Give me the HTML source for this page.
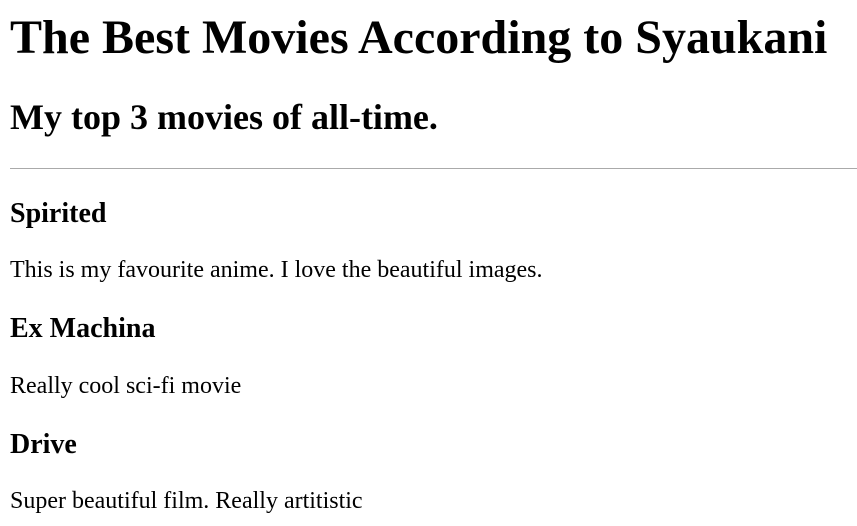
<!DOCTYPE html>
<html><head><meta charset="utf-8"><style>
html{background:#fff}
body{margin:0 10px 0 10px;font-family:"Liberation Serif","Times New Roman",serif;color:#000;line-height:1.15}
h1{font-size:48px;margin:10px 0 0;font-weight:bold}
h2{font-size:36px;margin:32px 0 0;font-weight:bold}
hr{border:none;border-top:1px solid #aaa;margin:29px 0 0;margin-right:-10px}
h3{font-size:28px;margin:29px 0 0;font-weight:bold}
p{font-size:24px;margin:27px 0 0}
p + h3{margin-top:29px}
</style></head><body>
<h1>The Best Movies According to Syaukani</h1>
<h2>My top 3 movies of all-time.</h2>
<hr>
<h3>Spirited</h3>
<p>This is my favourite anime. I love the beautiful images.</p>
<h3>Ex Machina</h3>
<p>Really cool sci-fi movie</p>
<h3>Drive</h3>
<p>Super beautiful film. Really artitistic</p>
</body></html>
